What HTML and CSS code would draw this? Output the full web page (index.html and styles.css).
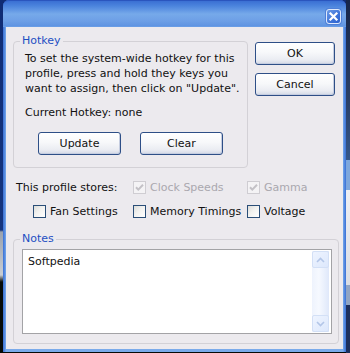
FILE: index.html
```html
<!DOCTYPE html>
<html>
<head>
<meta charset="utf-8">
<link rel="stylesheet" href="styles.css">
</head>
<body>
<div class="desk">
  <div class="window">
    <div class="titlebar">
      <div class="close">
        <svg width="13" height="13" viewBox="0 0 13 13"><path d="M3.5 3.5 L9.5 9.5 M9.5 3.5 L3.5 9.5" stroke="#fff" stroke-width="2.2" stroke-linecap="square"/></svg>
      </div>
    </div>
    <div class="frame">
      <div class="client">
        <div class="top">
          <fieldset class="group hotkey">
            <legend>Hotkey</legend>
            <p class="desc">To set the system-wide hotkey for this<br>profile, press and hold they keys you<br>want to assign, then click on "Update".</p>
            <p class="current">Current Hotkey: none</p>
            <div class="hk-buttons">
              <button class="btn">Update</button>
              <button class="btn">Clear</button>
            </div>
          </fieldset>
          <div class="side-buttons">
            <button class="btn">OK</button>
            <button class="btn">Cancel</button>
          </div>
        </div>
        <div class="stores">
          <span class="stores-label">This profile stores:</span>
          <label class="cb disabled"><span class="box"><svg width="11" height="11" viewBox="0 0 11 11"><path d="M2 5.2 L4.3 7.6 L9 2.8" fill="none" stroke="#c3c1c6" stroke-width="2"/></svg></span>Clock Speeds</label>
          <label class="cb disabled"><span class="box"><svg width="11" height="11" viewBox="0 0 11 11"><path d="M2 5.2 L4.3 7.6 L9 2.8" fill="none" stroke="#c3c1c6" stroke-width="2"/></svg></span>Gamma</label>
          <label class="cb first"><span class="box"></span>Fan Settings</label>
          <label class="cb"><span class="box"></span>Memory Timings</label>
          <label class="cb"><span class="box"></span>Voltage</label>
        </div>
        <fieldset class="group notes">
          <legend>Notes</legend>
          <div class="textarea">
            <div class="ta-text">Softpedia</div>
            <div class="scrollbar">
              <div class="sb-btn"><svg width="9" height="6" viewBox="0 0 9 6"><path d="M1 5 L4.5 1.5 L8 5" fill="none" stroke="#b3c6e8" stroke-width="1.6"/></svg></div>
              <div class="sb-btn"><svg width="9" height="6" viewBox="0 0 9 6"><path d="M1 1 L4.5 4.5 L8 1" fill="none" stroke="#b3c6e8" stroke-width="1.6"/></svg></div>
            </div>
          </div>
        </fieldset>
      </div>
    </div>
  </div>
  <div class="right-strip">
    <div class="rs a"></div><div class="rs b"></div><div class="rs c"></div><div class="rs d"></div><div class="rs e"></div>
  </div>
</div>
</body>
</html>
```

FILE: styles.css
```css
* { box-sizing: border-box; }
html, body { margin: 0; padding: 0; }
body {
  width: 350px;
  height: 353px;
  overflow: hidden;
  font-family: "DejaVu Sans", Verdana, sans-serif;
  font-size: 11px;
  color: #111;
  background: linear-gradient(180deg, #102c74 0, #14347e 230px, #9aa2ae 232px, #c9cdd3 275px, #060a08 282px, #060a08 353px);
}
.desk {
  display: flex;
  height: 353px;
}
.window {
  margin-left: 3px;
  width: 343px;
  height: 352px;
  display: flex;
  flex-direction: column;
  border-radius: 6px 6px 0 0;
  background: #4f86de;
}
.titlebar {
  height: 27px;
  flex: none;
  border-radius: 6px 6px 0 0;
  border-top: 1px solid #2a55be;
  background: linear-gradient(180deg, #3a6fd3 0, #4c84dd 5px, #76a9ea 13px, #6d9fe6 20px, #5f94e2 25px, #86b4ee 27px);
  display: flex;
  justify-content: flex-end;
  padding: 8px 5px 0 0;
}
.close {
  width: 15px;
  height: 15px;
  border: 1px solid #dfe9fb;
  border-radius: 3px;
  background: linear-gradient(135deg, #6c9be6 0, #3d73d9 60%, #2e63cf 100%);
  display: flex;
  align-items: center;
  justify-content: center;
  box-shadow: 0 0 0 1px #4f80d8;
}
.close svg { display: block; }
.frame {
  flex: 1;
  padding: 0 3px 3px 3px;
  background: linear-gradient(90deg, #3a70d6 0, #5d92e2 2px, #7aaaea 3px, #7aaaea 340px, #5d92e2 341px, #3a70d6 343px);
  display: flex;
}
.client {
  flex: 1;
  background: #eceaee;
  padding: 7px 0 0 7px;
  border-bottom: 0;
}
.top {
  display: flex;
  align-items: flex-start;
}
.group {
  margin: 0;
  border: 1px solid #d3d1d6;
  border-radius: 4px;
  min-width: 0;
}
.group legend {
  color: #1f4fc3;
  line-height: 14px;
  padding: 0 2px;
}
.hotkey {
  width: 235px;
  padding: 3px 10px 12px 11px;
}
.hotkey legend { margin-left: -5px; }
.desc {
  margin: 0;
  line-height: 15px;
  white-space: nowrap;
}
.current {
  margin: 9px 0 0 0;
  line-height: 15px;
}
.hk-buttons {
  display: flex;
  gap: 19px;
  margin: 12px 0 0 13px;
}
.btn {
  font-family: "DejaVu Sans", Verdana, sans-serif;
  font-size: 11px;
  color: #111;
  width: 83px;
  height: 23px;
  padding: 0;
  border: 1px solid #2e4f87;
  border-radius: 3px;
  background: linear-gradient(180deg, #ffffff 0, #f7f8fa 45%, #eaecf2 80%, #d3d9e6 100%);
  box-shadow: inset -1px -1px 0 #c5cde0;
}
.side-buttons {
  margin: 8px 0 0 7px;
  display: flex;
  flex-direction: column;
  gap: 8px;
}
.side-buttons .btn { width: 80px; }
.stores {
  margin: 12px 0 0 3px;
  display: grid;
  grid-template-columns: 117px 114px auto;
  row-gap: 9px;
  line-height: 15px;
}
.stores-label { white-space: nowrap; }
.cb {
  display: flex;
  align-items: center;
  gap: 4px;
  white-space: nowrap;
}
.cb.first { margin-left: 17px; }
.box {
  width: 13px;
  height: 13px;
  flex: none;
  border: 1px solid #2a4e78;
  background: linear-gradient(135deg, #dcdcd8 0, #f2f2f0 45%, #ffffff 100%);
  display: flex;
  align-items: center;
  justify-content: center;
}
.cb.disabled { color: #aaa8ae; }
.cb.disabled .box {
  border-color: #cfcdd2;
  background: #f4f3f5;
}
.notes {
  width: 326px;
  margin-top: 13px;
  padding: 3px 6px 9px 8px;
}
.notes legend { margin-left: -2px; }
.textarea {
  height: 85px;
  border: 1px solid #a3a3a6;
  background: #fff;
  display: flex;
  justify-content: space-between;
  padding: 1px 2px 1px 0;
}
.ta-text {
  padding: 3px 0 0 5px;
  line-height: 15px;
}
.scrollbar {
  width: 17px;
  display: flex;
  flex-direction: column;
  justify-content: space-between;
  background: linear-gradient(90deg, #eef3fd 0, #f6f9ff 40%, #dfe8fa 100%);
}
.sb-btn {
  height: 17px;
  border: 1px solid #d3e0f6;
  border-radius: 2px;
  background: linear-gradient(135deg, #eef4ff 0, #dde8fc 100%);
  display: flex;
  align-items: center;
  justify-content: center;
}
.sb-btn svg { display: block; }
.right-strip {
  width: 4px;
  display: flex;
  flex-direction: column;
}
.rs.a { height: 160px; background: linear-gradient(180deg, #17264a 0, #2a3f66 100px, #35578a 160px); }
.rs.b { height: 30px; background: #7ea7dc; }
.rs.c { height: 95px; background: linear-gradient(180deg, #eeeff3 0, #d9dde4 100%); }
.rs.d { height: 20px; background: #8fa4c4; }
.rs.e { flex: 1; background: #1d2f5c; }
```
